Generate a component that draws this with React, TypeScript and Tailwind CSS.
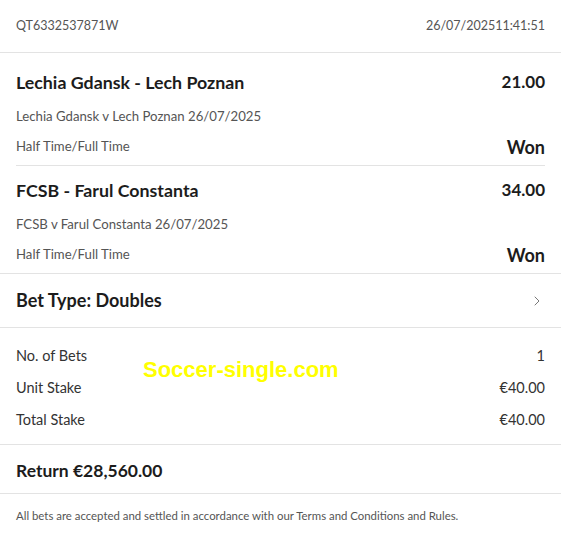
import { ChevronRight } from "lucide-react";

const legs = [
  { title: "Lechia Gdansk - Lech Poznan", odds: "21.00", event: "Lechia Gdansk v Lech Poznan 26/07/2025", market: "Half Time/Full Time", result: "Won" },
  { title: "FCSB - Farul Constanta", odds: "34.00", event: "FCSB v Farul Constanta 26/07/2025", market: "Half Time/Full Time", result: "Won" },
];

const stakes = [
  { label: "No. of Bets", value: "1" },
  { label: "Unit Stake", value: "€40.00" },
  { label: "Total Stake", value: "€40.00" },
];

export default function App() {
  return (
    <div className="relative w-[561px] h-[533px] bg-white text-[#222] font-['Lato',sans-serif]">
      <div className="flex h-[53px] items-center justify-between px-4 text-[12.5px] text-[#555] border-b border-[#e3e3e3]">
        <span>QT6332537871W</span>
        <span>26/07/202511:41:51</span>
      </div>

      <div className="px-4">
        {legs.map((l, i) => (
          <div key={l.title} className={i === 0 ? "border-b border-[#e3e3e3] h-[113px] pt-[17px]" : "h-[107px] pt-[12px]"}>
            <div className="flex h-[24px] items-center justify-between font-bold text-[#1c1c1c]">
              <span className="text-[17.8px]">{l.title}</span>
              <span className="text-[17px]">{l.odds}</span>
            </div>
            <div className="mt-[11px] flex h-[24px] items-center text-[13.2px] text-[#555]">{l.event}</div>
            <div className="mt-[6px] flex h-[24px] items-center justify-between">
              <span className="text-[13.2px] text-[#555]">{l.market}</span>
              <span className="text-[18px] font-bold text-[#1c1c1c]">{l.result}</span>
            </div>
          </div>
        ))}
      </div>

      <div className="flex h-[55px] items-center justify-between px-4 border-y border-[#e3e3e3]">
        <span className="text-[18px] font-bold text-[#1c1c1c]">Bet Type: Doubles</span>
        <ChevronRight className="h-4 w-4 text-[#555]" strokeWidth={1.2} />
      </div>

      <div className="px-4 pt-[12px] pb-[8px] border-b border-[#e3e3e3]">
        {stakes.map((s) => (
          <div key={s.label} className="flex h-[32px] items-center justify-between text-[14.5px] text-[#333]">
            <span>{s.label}</span>
            <span>{s.value}</span>
          </div>
        ))}
      </div>

      <div className="flex h-[49px] items-center px-4 pt-[4px] border-b border-[#e3e3e3]">
        <span className="text-[17.5px] font-bold text-[#1c1c1c]">Return €28,560.00</span>
      </div>

      <div className="px-4 pt-[13px] text-[11.4px] text-[#555]">
        All bets are accepted and settled in accordance with our Terms and Conditions and Rules.
      </div>

      <div className="absolute left-[143px] top-[353px] text-[22px] font-bold text-[#ffff00] font-['Liberation_Sans',sans-serif]">
        Soccer-single.com
      </div>
    </div>
  );
}
